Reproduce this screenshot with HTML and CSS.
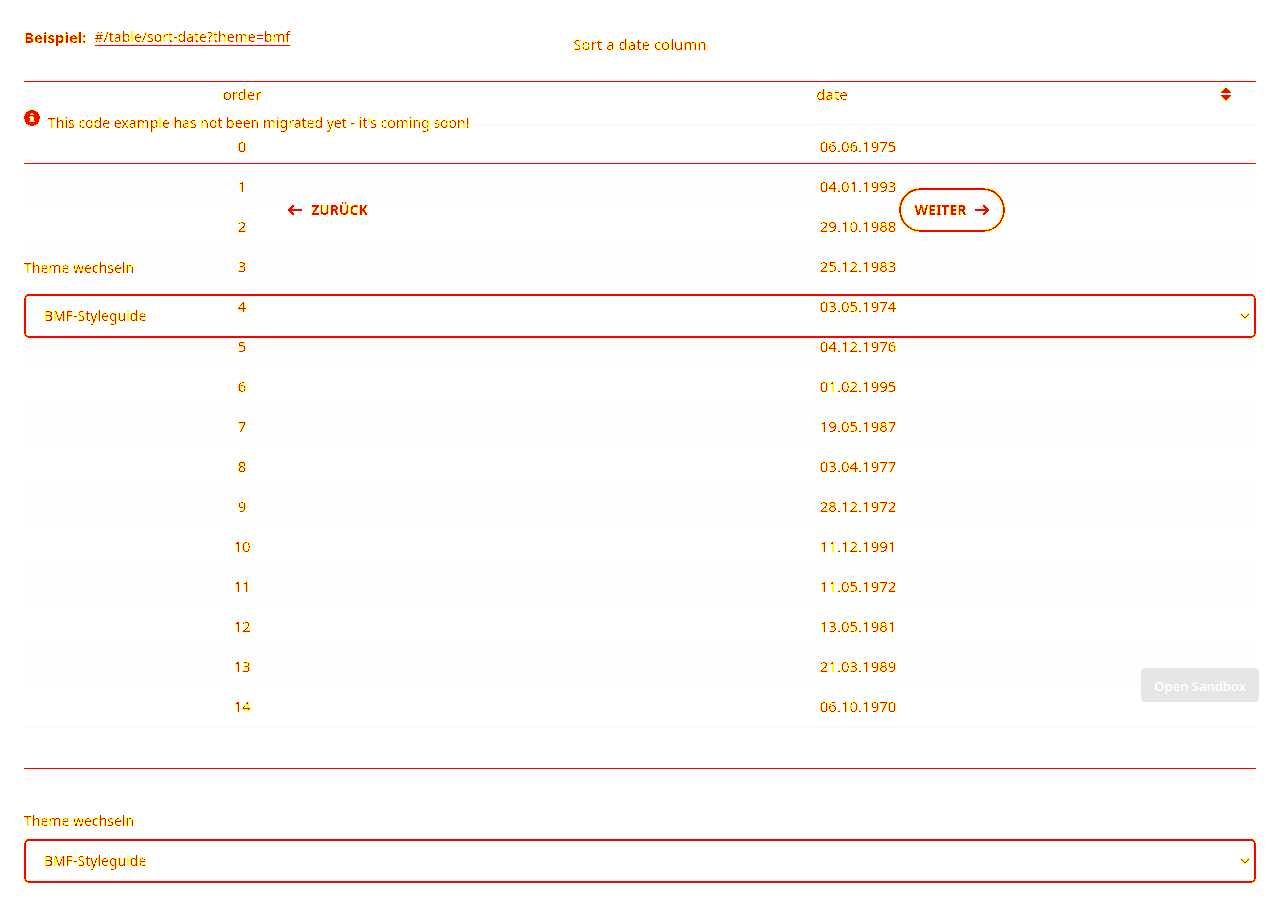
FILE: index.html
```html
<!DOCTYPE html>
<html lang="de">
<head>
<meta charset="utf-8">
<meta name="viewport" content="width=device-width, initial-scale=1">
<title>Sort a date column</title>
<link rel="stylesheet" href="styles.css">
</head>
<body>
<svg class="defs" width="0" height="0" aria-hidden="true">
  <filter id="edge" color-interpolation-filters="sRGB" x="-5%" y="-20%" width="110%" height="140%">
    <feComponentTransfer in="SourceAlpha" result="wide"><feFuncA type="linear" slope="60" intercept="-7"/></feComponentTransfer>
    <feFlood flood-color="#ffff00"/>
    <feComposite in2="wide" operator="in" result="yellow"/>
    <feComponentTransfer in="SourceAlpha" result="core"><feFuncA type="linear" slope="60" intercept="-44"/></feComponentTransfer>
    <feFlood flood-color="#ff0000"/>
    <feComposite in2="core" operator="in" result="red"/>
    <feMerge><feMergeNode in="yellow"/><feMergeNode in="red"/></feMerge>
  </filter>
</svg>
<main class="stack">
  <section class="layer example">
    <p class="path edge"><strong>Beispiel:</strong><a href="#/table/sort-date?theme=bmf">#/table/sort-date?theme=bmf</a></p>
    <hr>
    <div class="notice edge">
      <svg width="16" height="16" viewBox="0 0 16 16" aria-hidden="true"><path fill="currentColor" fill-rule="evenodd" d="M8 0a8 8 0 1 1 0 16A8 8 0 0 1 8 0ZM6.7 3.2v2h2.6v-2ZM5.7 6.5v1.4h1v2.7h-1V12h4.6v-1.4h-1V6.5Z"/></svg>
      <p>This code example has not been migrated yet - it's coming soon!</p>
    </div>
    <hr>
    <nav class="pager">
      <button type="button" class="pill edge"><svg width="14" height="12" viewBox="0 0 14 12" aria-hidden="true"><path d="M14 6H1M6 1 1 6l5 5"/></svg>ZURÜCK</button>
      <button type="button" class="pill outlined edge">WEITER<svg width="14" height="12" viewBox="0 0 14 12" aria-hidden="true"><path d="M0 6h13M8 1l5 5-5 5"/></svg></button>
    </nav>
    <div class="field roomy">
      <label class="edge" for="theme-a">Theme wechseln</label>
      <div class="choice edge">
        <select id="theme-a"><option>BMF-Styleguide</option></select>
        <svg width="10" height="6" viewBox="0 0 10 6" aria-hidden="true"><path d="M1 1l4 4 4-4"/></svg>
      </div>
    </div>
  </section>
  <section class="layer data">
    <table>
      <caption class="edge">Sort a date column</caption>
      <thead><tr>
        <th class="order"><span class="edge">order</span></th>
        <th><div class="sortable edge"><span>date</span><button type="button" aria-label="date sortieren"><svg width="10" height="14" viewBox="0 0 10 14" aria-hidden="true"><path fill="currentColor" d="M5 0l5 5v1H0V5ZM0 8h10v1l-5 5-5-5Z"/></svg></button></div></th>
      </tr></thead>
      <tbody>
        <tr><td><span class="edge">0</span></td><td><span class="edge">06.06.1975</span></td></tr>
        <tr><td><span class="edge">1</span></td><td><span class="edge">04.01.1993</span></td></tr>
        <tr><td><span class="edge">2</span></td><td><span class="edge">29.10.1988</span></td></tr>
        <tr><td><span class="edge">3</span></td><td><span class="edge">25.12.1983</span></td></tr>
        <tr><td><span class="edge">4</span></td><td><span class="edge">03.05.1974</span></td></tr>
        <tr><td><span class="edge">5</span></td><td><span class="edge">04.12.1976</span></td></tr>
        <tr><td><span class="edge">6</span></td><td><span class="edge">01.02.1995</span></td></tr>
        <tr><td><span class="edge">7</span></td><td><span class="edge">19.05.1987</span></td></tr>
        <tr><td><span class="edge">8</span></td><td><span class="edge">03.04.1977</span></td></tr>
        <tr><td><span class="edge">9</span></td><td><span class="edge">28.12.1972</span></td></tr>
        <tr><td><span class="edge">10</span></td><td><span class="edge">11.12.1991</span></td></tr>
        <tr><td><span class="edge">11</span></td><td><span class="edge">11.05.1972</span></td></tr>
        <tr><td><span class="edge">12</span></td><td><span class="edge">13.05.1981</span></td></tr>
        <tr><td><span class="edge">13</span></td><td><span class="edge">21.03.1989</span></td></tr>
        <tr><td><span class="edge">14</span></td><td><span class="edge">06.10.1970</span></td></tr>
      </tbody>
    </table>
    <hr>
    <div class="field">
      <label class="edge" for="theme-b">Theme wechseln</label>
      <div class="choice edge">
        <select id="theme-b"><option>BMF-Styleguide</option></select>
        <svg width="10" height="6" viewBox="0 0 10 6" aria-hidden="true"><path d="M1 1l4 4 4-4"/></svg>
      </div>
    </div>
  </section>
</main>
<button type="button" class="sandbox">Open Sandbox</button>
</body>
</html>
```
FILE: styles.css
```css
*, *::before, *::after { box-sizing: border-box; }
body { margin: 0; background: #fff; color: #f00; font: 15px/20px "Noto Sans", "Open Sans", sans-serif; }
p { margin: 0; }
hr { width: 100%; height: 1px; margin: 0; border: 0; background: #f00; }
button, select { font: inherit; color: inherit; background: transparent; }
svg { flex: none; }
path:not([fill]) { fill: none; stroke: currentColor; stroke-width: 2; }
.defs { display: block; }
.edge { filter: url(#edge); }

/* Both page states share one grid cell, the example lying over the data. */
.stack { display: grid; grid-template-columns: minmax(0, 1fr); padding: 0 24px 24px; }
.layer { grid-area: 1 / 1; display: flex; flex-direction: column; }
.example { z-index: 1; align-self: start; }

.path { display: flex; gap: 8px; padding: 27px 0 34px; font-size: 14px; }
.path a { color: inherit; text-underline-offset: 3px; }
.path strong { font-size: 15px; }
.notice { display: flex; gap: 8px; padding: 28px 0 31px; font-size: 14px; }
.notice p { padding-top: 4px; line-height: 18px; }
.pager { display: grid; grid-template-columns: 1fr 1fr; column-gap: 16px; justify-items: center; padding-top: 24px; }
.pill { display: flex; align-items: center; gap: 9px; height: 44px; padding: 0 14px; border: 2px solid transparent; border-radius: 22px; font-size: 14px; font-weight: 700; }
.outlined { border-color: #f00; }

.field { display: grid; gap: 8px; padding-top: 42px; }
.field label { justify-self: start; font-size: 14px; }
.roomy { gap: 16px; padding-top: 26px; }
.choice { display: grid; align-items: center; }
.choice select { grid-area: 1 / 1; width: 100%; height: 44px; padding: 0 18px; border: 2px solid #f00; border-radius: 5px; appearance: none; font-size: 14px; }
.choice svg { grid-area: 1 / 1; justify-self: end; margin-right: 6px; }
.choice path { stroke-width: 1.6; }

table { width: 100%; table-layout: fixed; border-collapse: separate; border-spacing: 0; margin-bottom: 40px; border-bottom: 2px solid #fafafa; text-align: center; }
caption { padding: 34px 0 28px; }
th { height: 44px; padding: 2px 8px 0; border-bottom: 2px solid #fafafa; font-weight: 400; vertical-align: top; }
th.order { width: 35.4%; }
td { height: 40px; padding: 0 8px; }
td span, th > span { display: inline-block; }
tbody tr:nth-child(even) { background: #fdfdfd; }
.sortable { display: flex; align-items: center; gap: 8px; }
.sortable span { flex: 1; }
.sortable button { display: grid; place-items: center; width: 44px; height: 20px; padding: 0; border: 0; }

.sandbox { position: fixed; right: 21px; bottom: 205px; height: 34px; padding: 2px 13px 0; border: 0; border-radius: 4px; background: #e6e6e6; color: #fff; font: 600 13px/20px "Open Sans", "Noto Sans", sans-serif; }
```
